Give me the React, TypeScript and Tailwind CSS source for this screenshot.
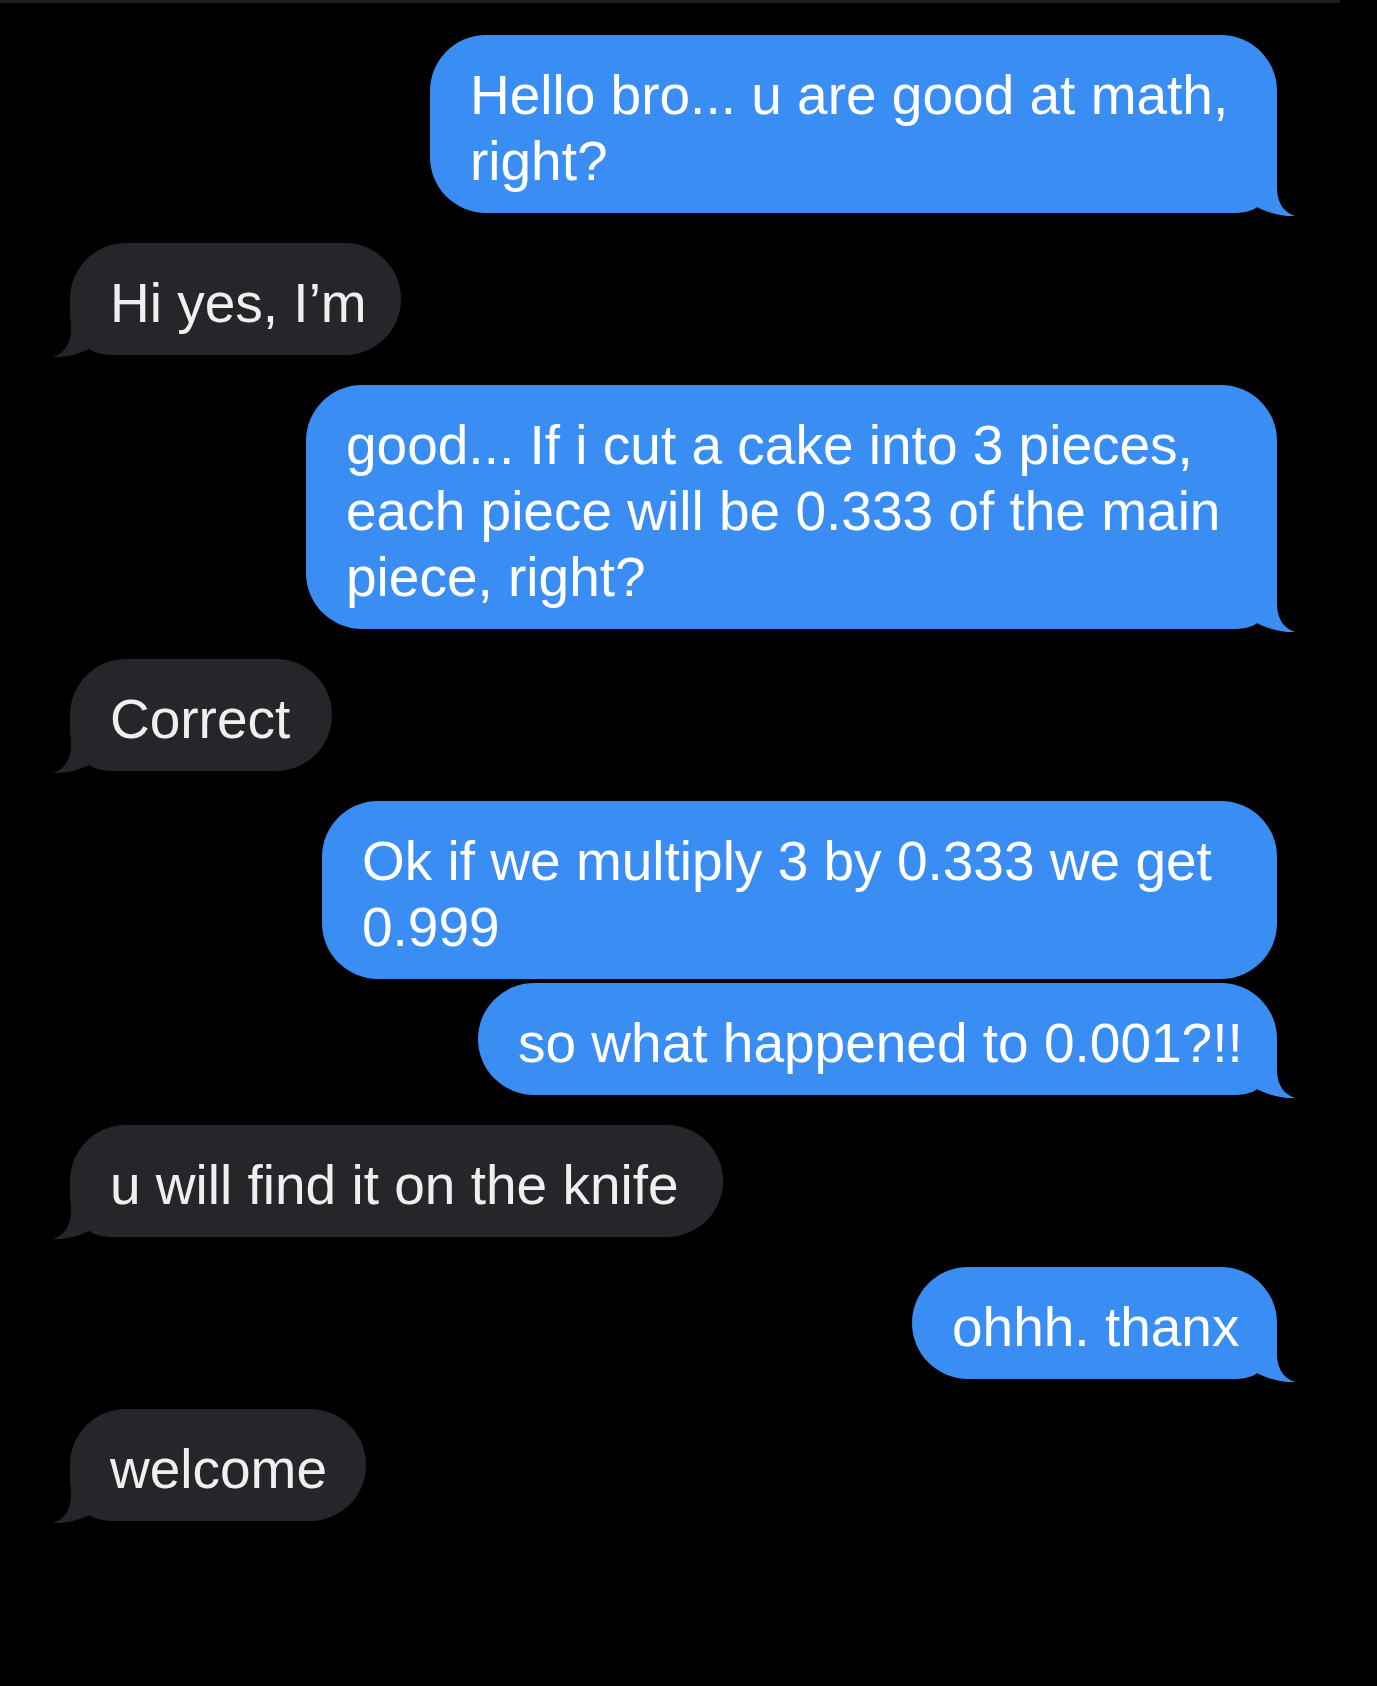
import React from 'react';

type Msg = {
  from: 'me' | 'them';
  lines: string[];
  width: string;
  tail: boolean;
  grouped?: boolean;
};

const messages: Msg[] = [
  { from: 'me', lines: ['Hello bro... u are good at math,', 'right?'], width: 'w-[847px]', tail: true },
  { from: 'them', lines: ['Hi yes, I\u2019m'], width: 'w-[331px]', tail: true },
  {
    from: 'me',
    lines: ['good... If i cut a cake into 3 pieces,', 'each piece will be 0.333 of the main', 'piece, right?'],
    width: 'w-[971px]',
    tail: true,
  },
  { from: 'them', lines: ['Correct'], width: 'w-[262px]', tail: true },
  { from: 'me', lines: ['Ok if we multiply 3 by 0.333 we get', '0.999'], width: 'w-[955px]', tail: false },
  { from: 'me', lines: ['so what happened to 0.001?!!'], width: 'w-[799px]', tail: true, grouped: true },
  { from: 'them', lines: ['u will find it on the knife'], width: 'w-[653px]', tail: true },
  { from: 'me', lines: ['ohhh. thanx'], width: 'w-[365px]', tail: true },
  { from: 'them', lines: ['welcome'], width: 'w-[296px]', tail: true },
];

function Tail({ side }: { side: 'left' | 'right' }) {
  if (side === 'right') {
    return (
      <svg
        className="absolute -right-[18px] -bottom-[3px]"
        width="50"
        height="50"
        viewBox="0 0 50 50"
      >
        <path d="M32 0 L32 22 C32 38 40 47 50 50 C40 51 22 47 12 41 L12 20 Z" fill="#3a8ef3" />
      </svg>
    );
  }
  return (
    <svg
      className="absolute -left-[17px] -bottom-[2px]"
      width="50"
      height="50"
      viewBox="0 0 50 50"
    >
      <path d="M18 0 L18 22 C18 38 10 47 0 50 C10 51 28 47 38 41 L38 20 Z" fill="#26252a" />
    </svg>
  );
}

function Bubble({ msg }: { msg: Msg }) {
  const mine = msg.from === 'me';
  return (
    <div className={`flex ${mine ? 'justify-end' : 'justify-start'} ${msg.grouped ? 'mt-[4px]' : 'mt-[30px] first:mt-0'}`}>
      <div
        className={`relative ${msg.width} px-[40px] pt-[27px] pb-[19px] text-[55px] leading-[66px] whitespace-nowrap ${
          mine
            ? `bg-[#3a8ef3] text-white rounded-[56px] ${msg.tail ? 'rounded-br-[40px]' : ''}`
            : 'bg-[#26252a] text-[#efefef] rounded-[56px] rounded-bl-[40px]'
        }`}
      >
        {msg.lines.map((l, i) => (
          <div key={i}>{l}</div>
        ))}
        {msg.tail && <Tail side={mine ? 'right' : 'left'} />}
      </div>
    </div>
  );
}

export default function App() {
  return (
    <div className="min-h-[1686px] w-[1377px] bg-black font-['Liberation_Sans',Arial,sans-serif] antialiased">
      <div className="h-[3px] w-[1340px] bg-[#1e1e1e]" />
      <div className="flex flex-col pl-[70px] pr-[100px] pt-[32px]">
        {messages.map((m, i) => (
          <Bubble key={i} msg={m} />
        ))}
      </div>
    </div>
  );
}
